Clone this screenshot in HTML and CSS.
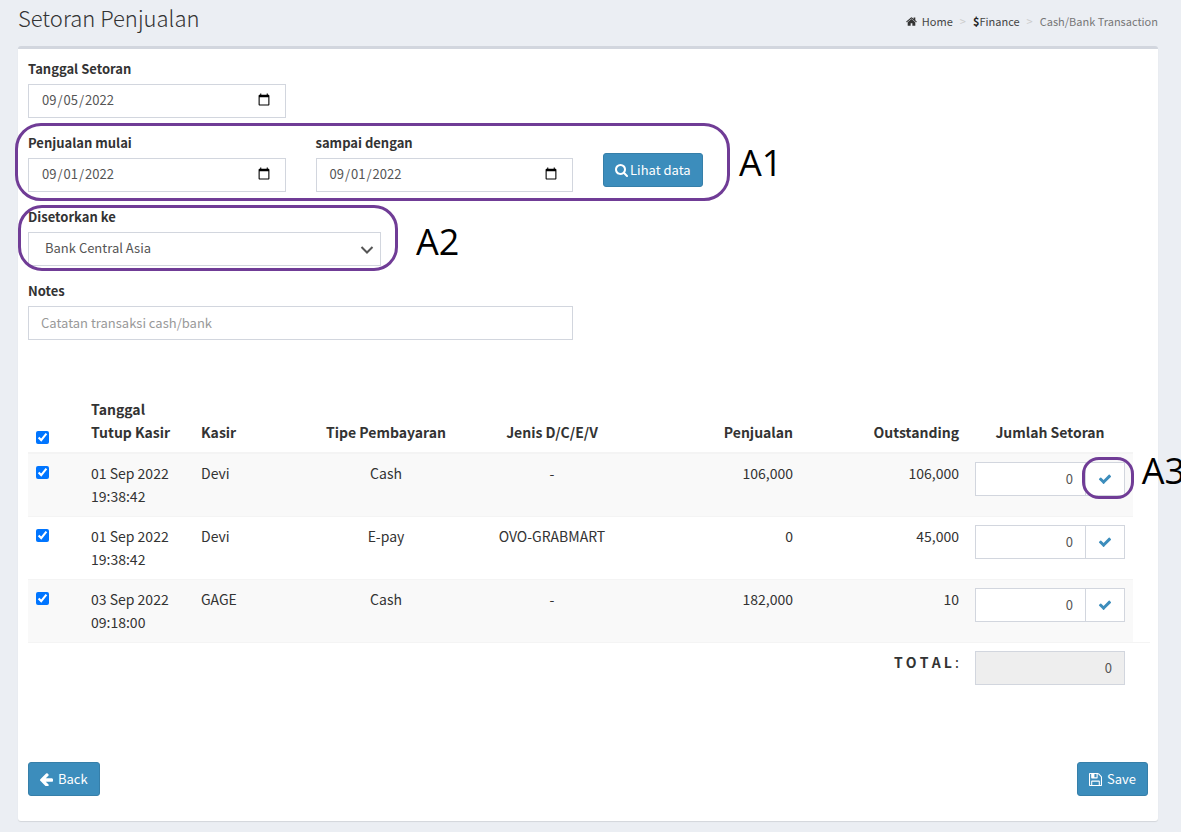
FILE: index.html
```html
<!DOCTYPE html>
<html lang="id">
<head>
<meta charset="utf-8">
<meta name="viewport" content="width=device-width, initial-scale=1">
<title>Setoran Penjualan</title>
<link rel="stylesheet" href="styles.css">
</head>
<body>
<svg class="sprite" aria-hidden="true">
  <symbol id="i-check" viewBox="0 0 1792 1792"><path d="M1671 566q0 40-28 68l-724 724-136 136q-28 28-68 28t-68-28l-136-136-362-362q-28-28-28-68t28-68l136-136q28-28 68-28t68 28l294 295 656-657q28-28 68-28t68 28l136 136q28 28 28 68z"/></symbol>
</svg>
<div class="page">
  <header class="page-head">
    <h1>Setoran Penjualan</h1>
    <nav aria-label="Breadcrumb">
      <ol class="crumbs">
        <li><a href="#"><svg class="home" viewBox="0 0 1664 1312" aria-hidden="true"><path d="M1408 768v480q0 26-19 45t-45 19H960V928H704v384H320q-26 0-45-19t-19-45V768l1-6 575-474 575 474q1 2 1 6zm223-69-62 74q-8 9-21 11h-3q-13 0-21-7L832 200 140 777q-12 8-24 7-13-2-21-11l-62-74q-8-10-7-23t11-21l719-599q32-26 76-26t76 26l244 204V65q0-14 9-23t23-9h192q14 0 23 9t9 23v408l219 182q10 8 11 21t-7 23z"/></svg>Home</a></li>
        <li><a href="#"><b class="dollar">$</b>Finance</a></li>
        <li class="current">Cash/Bank Transaction</li>
      </ol>
    </nav>
  </header>

  <main class="box">
    <form>
      <div class="grid-4">
        <div class="field">
          <label for="deposit">Tanggal Setoran</label>
          <input class="control" type="date" id="deposit" value="2022-09-05">
        </div>
      </div>
      <div class="grid-4">
        <div class="field">
          <label for="from">Penjualan mulai</label>
          <input class="control" type="date" id="from" value="2022-09-01">
        </div>
        <div class="field">
          <label for="to">sampai dengan</label>
          <input class="control" type="date" id="to" value="2022-09-01">
        </div>
        <div class="action">
          <button class="btn view" type="button"><svg viewBox="0 0 1664 1664" aria-hidden="true"><path d="M1152 704q0-185-131.500-316.500T704 256 387.500 387.500 256 704t131.500 316.500T704 1152t316.500-131.500T1152 704zm512 832q0 52-38 90t-90 38q-54 0-90-38l-343-342q-179 124-399 124-143 0-273.500-55.500t-225-150-150-225T0 704t55.500-273.500 150-225 225-150T704 0t273.500 55.500 225 150 150 225T1408 704q0 220-124 399l343 343q37 37 37 90z"/></svg>Lihat data</button>
        </div>
      </div>
      <div class="grid-3">
        <div class="field">
          <label for="bank">Disetorkan ke</label>
          <div class="select">
            <select class="control" id="bank"><option>Bank Central Asia</option></select>
            <svg class="chevron" viewBox="0 0 14 10" aria-hidden="true"><path d="M1.500 2 7 7.500 12.500 2"/></svg>
          </div>
        </div>
      </div>
      <div class="grid-4">
        <div class="field wide">
          <label for="notes">Notes</label>
          <input class="control" type="text" id="notes" placeholder="Catatan transaksi cash/bank">
        </div>
      </div>

      <table>
        <colgroup>
          <col class="c-check"><col class="c-text"><col class="c-text"><col class="c-wide"><col class="c-wide"><col class="c-wide"><col class="c-wide"><col class="c-wide"><col class="c-end">
        </colgroup>
        <thead>
          <tr>
            <th><input type="checkbox" checked aria-label="Pilih semua"></th>
            <th>Tanggal<br>Tutup Kasir</th>
            <th>Kasir</th>
            <th class="mid">Tipe Pembayaran</th>
            <th class="mid">Jenis D/C/E/V</th>
            <th class="num">Penjualan</th>
            <th class="num">Outstanding</th>
            <th class="mid">Jumlah Setoran</th>
          </tr>
        </thead>
        <tbody>
          <tr>
            <td><input type="checkbox" checked aria-label="Pilih baris 1"></td>
            <td>01 Sep 2022<br>19:38:42</td>
            <td>Devi</td>
            <td class="mid">Cash</td>
            <td class="mid">-</td>
            <td class="num">106,000</td>
            <td class="num">106,000</td>
            <td><div class="group"><input class="control amount" type="text" value="0" aria-label="Jumlah setoran 1"><button class="addon" type="button" aria-label="Isi jumlah 1"><svg viewBox="0 0 1792 1792"><use href="#i-check"/></svg></button></div></td>
          </tr>
          <tr>
            <td><input type="checkbox" checked aria-label="Pilih baris 2"></td>
            <td>01 Sep 2022<br>19:38:42</td>
            <td>Devi</td>
            <td class="mid">E-pay</td>
            <td class="mid">OVO-GRABMART</td>
            <td class="num">0</td>
            <td class="num">45,000</td>
            <td><div class="group"><input class="control amount" type="text" value="0" aria-label="Jumlah setoran 2"><button class="addon" type="button" aria-label="Isi jumlah 2"><svg viewBox="0 0 1792 1792"><use href="#i-check"/></svg></button></div></td>
          </tr>
          <tr>
            <td><input type="checkbox" checked aria-label="Pilih baris 3"></td>
            <td>03 Sep 2022<br>09:18:00</td>
            <td>GAGE</td>
            <td class="mid">Cash</td>
            <td class="mid">-</td>
            <td class="num">182,000</td>
            <td class="num">10</td>
            <td><div class="group"><input class="control amount" type="text" value="0" aria-label="Jumlah setoran 3"><button class="addon" type="button" aria-label="Isi jumlah 3"><svg viewBox="0 0 1792 1792"><use href="#i-check"/></svg></button></div></td>
          </tr>
        </tbody>
        <tfoot>
          <tr>
            <td class="num" colspan="7"><label for="total"><b>T O T A L</b> :</label></td>
            <td><input class="control amount" type="text" id="total" value="0" readonly></td>
            <td></td>
          </tr>
        </tfoot>
      </table>

      <div class="buttons">
        <button class="btn" type="button"><svg viewBox="0 0 1472 1472" aria-hidden="true"><path d="M1472 736v128q0 53-32.500 90.500T1355 992H651l293 294q38 36 38 90t-38 90l-75 76q-37 37-90 37-52 0-91-37L37 890Q0 853 0 800q0-52 37-91L688 59q38-38 91-38 52 0 90 38l75 74q38 38 38 91t-38 91L651 608h704q52 0 84.500 37.500T1472 736z"/></svg>Back</button>
        <button class="btn" type="submit"><svg viewBox="0 0 1536 1536" aria-hidden="true"><path d="M384 1408h768v-384H384v384zm896 0h128V512q0-14-10-38.500t-20-34.500l-281-281q-10-10-34-20t-39-10v416q0 40-28 68t-68 28H352q-40 0-68-28t-28-68V128H128v1280h128V992q0-40 28-68t68-28h832q40 0 68 28t28 68v416zM896 480V160q0-13-9.500-22.500T864 128H672q-13 0-22.500 9.500T640 160v320q0 13 9.500 22.500T672 512h192q13 0 22.500-9.500T896 480zm640 32v928q0 40-28 68t-68 28H96q-40 0-68-28t-28-68V96q0-40 28-68T96 0h928q40 0 88 20t76 48l280 280q28 28 48 76t20 88z"/></svg>Save</button>
      </div>
    </form>
  </main>

  <div class="ring ring-1"></div><span class="note note-1">A1</span>
  <div class="ring ring-2"></div><span class="note note-2">A2</span>
  <div class="ring ring-3"></div><span class="note note-3">A3</span>
</div>
</body>
</html>
```
FILE: styles.css
```css
* { box-sizing: border-box; }
body {
  margin: 0;
  background: #ebeef3;
  color: #333;
  font-family: "Noto Sans CJK SC", "Noto Sans", sans-serif;
  font-size: 13px;
  line-height: 20px;
}
.sprite { display: none; }
.page {
  position: relative;
  padding: 0 23px 10px 18px;
  overflow: hidden;
}
.page-head {
  display: flex;
  justify-content: space-between;
  align-items: center;
  height: 46px;
  padding-bottom: 4px;
}
h1 {
  margin: 0;
  padding-bottom: 8px;
  font-size: 22px;
  line-height: 26px;
  font-weight: 300;
}
.crumbs {
  display: flex;
  margin: 0;
  padding: 0;
  list-style: none;
  font-size: 11px;
}
.crumbs a { color: #444; text-decoration: none; }
.crumbs li + li::before { content: ">"; padding: 0 7px; color: #ccc; }
.current { color: #777; }
.home { width: 11px; height: 9px; margin-right: 5px; fill: #333; }
.dollar { color: #222; }

.box {
  padding: 10px 10px 25px;
  background: #fff;
  border-top: 3px solid #d2d6de;
  border-radius: 3px;
  box-shadow: 0 1px 1px rgba(0, 0, 0, .1);
}
.grid-4, .grid-3 { display: grid; column-gap: 30px; margin-bottom: 15px; }
.grid-4 { grid-template-columns: repeat(4, 1fr); }
.grid-3 { grid-template-columns: repeat(3, 1fr); }
.wide { grid-column: span 2; }
.field label { display: block; margin-bottom: 5px; font-weight: 700; }
.control {
  display: block;
  width: 100%;
  height: 34px;
  padding: 5px 12px 7px;
  border: 1px solid #d2d6de;
  border-radius: 0;
  background: #fff;
  color: #555;
  font: inherit;
  font-size: 13px;
  line-height: 20px;
}
.control::placeholder { color: #999; opacity: 1; }
.control::-webkit-calendar-picker-indicator { width: 14px; height: 14px; }
.select { position: relative; }
.select .control { appearance: none; padding-left: 16px; }
.chevron {
  position: absolute;
  right: 7px;
  top: 13px;
  width: 14px;
  height: 10px;
  fill: none;
  stroke: #555;
  stroke-width: 2;
  pointer-events: none;
}
.action { padding-top: 20px; }
.btn {
  display: inline-flex;
  align-items: center;
  gap: 5px;
  height: 34px;
  padding: 0 11px;
  border: 1px solid #367fa9;
  border-radius: 3px;
  background: #3c8dbc;
  color: #fff;
  font: inherit;
}
.btn svg { width: 13px; height: 13px; fill: #fff; }
.view { gap: 2px; }

table {
  width: 100%;
  margin-top: 50px;
  table-layout: fixed;
  border-spacing: 0;
  font-size: 14px;
  line-height: 23px;
}
.c-check { width: 55px; }
.c-text { width: 110px; }
.c-wide { width: 166px; }
.c-end { width: 17px; }
th, td { padding: 8px; text-align: left; vertical-align: top; }
th { vertical-align: bottom; font-weight: 700; border-bottom: 2px solid #f4f4f4; }
tbody tr:nth-child(odd) td { background: #f9f9f9; }
tbody tr + tr td, tfoot td { border-top: 1px solid #f4f4f4; }
th.mid, td.mid { text-align: center; }
th.num, td.num { text-align: right; }
input[type="checkbox"] { display: block; width: 13px; height: 13px; margin: 0; }
td input[type="checkbox"] { margin-top: 4px; }
.group { display: flex; }
.amount { text-align: right; }
.amount[readonly] { background: #eee; }
.addon {
  display: grid;
  place-items: center;
  flex: 0 0 39px;
  padding: 0;
  border: 1px solid #d2d6de;
  border-left: 0;
  background: #fff;
}
.addon svg { width: 14px; height: 14px; fill: #3c8dbc; }
.buttons { display: flex; justify-content: space-between; margin-top: 69px; }

/* Callouts laid over the form */
.ring { position: absolute; border: 3px solid #703c96; pointer-events: none; }
.ring-1 { left: 15px; top: 123px; width: 715px; height: 78px; border-radius: 26px; }
.ring-2 { left: 18px; top: 205px; width: 380px; height: 66px; border-radius: 24px; }
.ring-3 { left: 1082px; top: 457px; width: 52px; height: 42px; border-radius: 17px; }
.note {
  position: absolute;
  color: #000;
  font-family: "Open Sans", "Noto Sans", sans-serif;
  font-size: 36px;
  line-height: 40px;
}
.note-1 { left: 739px; top: 143px; }
.note-2 { left: 416px; top: 222px; }
.note-3 { right: -4px; top: 451px; }
```
